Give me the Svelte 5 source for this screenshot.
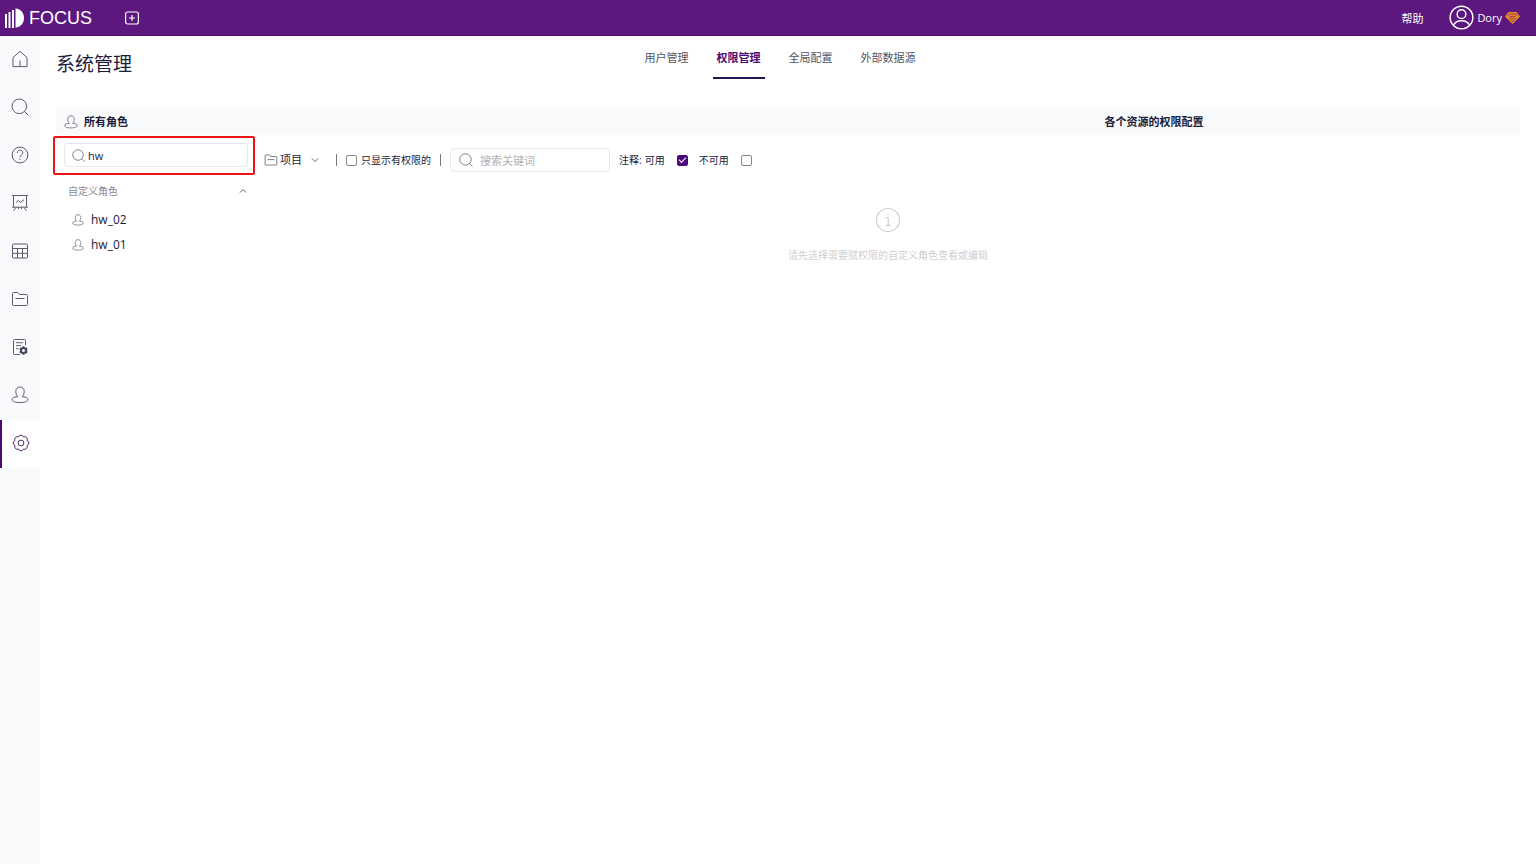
<script lang="ts">
  type Role = { id: number; name: string };

  const navItems = [
    { key: "home", label: "首页" },
    { key: "search", label: "搜索" },
    { key: "help", label: "问答" },
    { key: "board", label: "数据看板" },
    { key: "table", label: "数据表" },
    { key: "folder", label: "资源" },
    { key: "config", label: "数据配置" },
    { key: "user", label: "用户" },
    { key: "gear", label: "系统管理" },
  ];
  const tabs = ["用户管理", "权限管理", "全局配置", "外部数据源"];
  const roles: Role[] = [
    { id: 2, name: "hw_02" },
    { id: 1, name: "hw_01" },
  ];

  let activeNav = $state("gear");
  let activeTab = $state("权限管理");
  let roleFilter = $state("hw");
  let keyword = $state("");
  let onlyGranted = $state(false);
  let available = $state(true);
  let unavailable = $state(false);
  let expanded = $state(true);

  const visibleRoles = $derived(roles.filter((r) => r.name.includes(roleFilter)));
</script>

{#snippet icon(name: string, size: number)}
  <svg class="icon" width={size} height={size} viewBox="0 0 18 18" aria-hidden="true">
    {#if name === "home"}
      <path d="M2 7.600 9 1.300l7 6.300v9H2zM9 16.600V10.500" />
    {:else if name === "search"}
      <circle cx="8.300" cy="8.300" r="7.300" />
      <path d="m13.300 13.300 4 4" />
    {:else if name === "help"}
      <circle cx="9" cy="9" r="7.900" />
      <path d="M6.200 7c0-3.800 5.700-3.700 5.700-.3 0 2.200-2.900 2-2.900 4.600M9 12.700v1.300" />
    {:else if name === "board"}
      <path d="M1 1.500h16M2.500 1.500v11.700M15.500 1.500v11.700M1 13.200h16M5.200 13.200l-2.700 3.600M12.800 13.200l2.700 3.600M7.500 13.200v2M10.500 13.200v2M5 8.500l2.300-2 2.400 2L13 5.700" />
    {:else if name === "table"}
      <rect x="1.500" y="2" width="15" height="14" rx="1" />
      <path d="M1.500 6.500h15M1.500 11.300h15M6.500 6.500V16M11.500 6.500V16" />
    {:else if name === "folder"}
      <path d="M1.500 15V3.500c0-.6.400-1 1-1h4.300l1.700 2h7c.6 0 1 .4 1 1V14.500c0 .6-.4 1-1 1h-13c-.6 0-1-.4-1-1M4.500 8.500h9" />
    {:else if name === "config"}
      <path d="M9 16.500H3.500c-1 0-1-.5-1-1v-13c0-.6.400-1 1-1h10c.6 0 1 .4 1 1V7M5 4.700h7M5 7.700h5M5 10.700h2.500" />
      <circle class="cog" cx="12.500" cy="12.500" r="2.500" />
      <path class="cog" d="M12.500 8.200v1.600M12.500 15.200v1.600M8.800 10.300l1.400.9M14.800 13.800l1.400.9M8.800 14.700l1.400-.9M14.800 11.200l1.400-.9" />
    {:else if name === "user"}
      <path d="M6.800 10.700C5.500 9.400 4.800 7.400 4.800 5.400 4.800 2.700 6.500 1 9 1s4.200 1.700 4.200 4.400c0 2-.7 4-2 5.300" />
      <path d="M6.800 10.700C3.300 10.900 1 12 1 13.600c0 2 3.500 3 8 3s8-1 8-3c0-1.600-2.300-2.700-5.800-2.900" />
    {:else if name === "gear"}
      <circle cx="9" cy="9" r="2.900" />
      <path d="M6.500 3a2.600 2.600 0 0 1 5 0a2.600 2.600 0 0 1 3.500 3.500a2.600 2.600 0 0 1 0 5a2.600 2.600 0 0 1-3.500 3.500a2.600 2.600 0 0 1-5 0a2.600 2.600 0 0 1-3.500-3.500a2.600 2.600 0 0 1 0-5a2.600 2.600 0 0 1 3.500-3.500z" />
    {/if}
  </svg>
{/snippet}

<div class="page">
  <header class="topbar">
    <a class="logo" href="#home">
      <svg width="20" height="20" viewBox="0 0 20 20" aria-hidden="true">
        <path d="M0 6h2v14H0zM3.500 4h2v16h-2zM7 2h2v18H7zM10.500 0.500C15.500.500 19 4.800 19 10s-3.500 9.500-8.500 9.500z" />
      </svg>
      <span>FOCUS</span>
    </a>
    <button class="create" aria-label="新建">
      <svg width="14" height="14" viewBox="0 0 14 14" aria-hidden="true">
        <rect x="0.600" y="1" width="12.800" height="12" rx="2" />
        <path d="M7 4v6M4 7h6" />
      </svg>
    </button>
    <div class="account">
      <a class="help" href="#help">帮助</a>
      <button class="profile">
        <svg width="25" height="25" viewBox="0 0 26 26" aria-hidden="true">
          <circle cx="13" cy="13" r="11.800" />
          <circle cx="13" cy="9.500" r="4.500" />
          <path d="M4.500 21.200c1.500-3.400 4.900-4.900 8.500-4.900s7 1.500 8.500 4.900" />
        </svg>
        <span>Dory</span>
        <svg class="gem" width="15" height="12" viewBox="0 0 15 12" aria-hidden="true">
          <path class="gem-body" d="M3.500 0h8L15 4.500 7.500 12 0 4.500z" />
          <path class="gem-facets" d="M2.300 4.300 4.200 2h6.600l1.900 2.300M5 4.300h5L7.500 7.300zM4 6l3.500 3.800L11 6" />
        </svg>
      </button>
    </div>
  </header>

  <div class="body">
    <nav class="sidebar">
      {#each navItems as item (item.key)}
        <button
          class="nav-item"
          class:active={activeNav === item.key}
          aria-label={item.label}
          onclick={() => (activeNav = item.key)}
        >
          {@render icon(item.key, 18)}
        </button>
      {/each}
    </nav>

    <main class="content">
      <div class="heading">
        <h1>系统管理</h1>
        <div class="tabs" role="tablist">
          {#each tabs as tab}
            <button
              class="tab"
              class:active={activeTab === tab}
              role="tab"
              aria-selected={activeTab === tab}
              onclick={() => (activeTab = tab)}>{tab}</button
            >
          {/each}
        </div>
      </div>

      <div class="band">
        <h2 class="band-roles">{@render icon("user", 14)}所有角色</h2>
        <h2 class="band-resources">各个资源的权限配置</h2>
      </div>

      <div class="columns">
        <aside class="roles">
          <div class="role-search">
            <label class="field">
              {@render icon("search", 13)}
              <input type="text" aria-label="搜索角色" bind:value={roleFilter} />
            </label>
            <span class="marker"></span>
          </div>
          <button class="group" aria-expanded={expanded} onclick={() => (expanded = !expanded)}>
            自定义角色
            <svg class="icon" width="8" height="8" viewBox="0 0 8 8" aria-hidden="true">
              <path d="m1 5.500 3-3 3 3" />
            </svg>
          </button>
          {#if expanded}
            <ul>
              {#each visibleRoles as role (role.id)}
                <li><button class="role">{@render icon("user", 12)}{role.name}</button></li>
              {/each}
            </ul>
          {/if}
        </aside>

        <section class="resources">
          <div class="toolbar">
            <button class="kind">
              {@render icon("folder", 14)}
              项目
              <svg class="icon chevron" width="8" height="8" viewBox="0 0 8 8" aria-hidden="true">
                <path d="m1 2.500 3 3 3-3" />
              </svg>
            </button>
            <span class="divider"></span>
            <label class="only">
              <input type="checkbox" bind:checked={onlyGranted} />只显示有权限的
            </label>
            <span class="divider"></span>
            <label class="field keyword">
              {@render icon("search", 14)}
              <input type="text" placeholder="搜索关键词" aria-label="搜索关键词" bind:value={keyword} />
            </label>
            <div class="legend">
              <span>注释:</span>
              <label>可用<input type="checkbox" bind:checked={available} /></label>
              <label>不可用<input type="checkbox" bind:checked={unavailable} /></label>
            </div>
          </div>

          <div class="empty">
            <svg width="26" height="26" viewBox="0 0 26 26" aria-hidden="true">
              <circle cx="13" cy="13" r="11.500" />
              <path d="M13 6.500v1.800M11 10.700h2.200v7.500M10.700 18.300h5" />
            </svg>
            <p>请先选择需要赋权限的自定义角色查看或编辑</p>
          </div>
        </section>
      </div>
    </main>
  </div>
</div>

<style>
  :global(body) {
    margin: 0;
  }

  .page {
    display: flex;
    flex-direction: column;
    min-height: 100vh;
    background: #fff;
    color: #1b1b3a;
    font-family: "Open Sans", "Noto Sans CJK SC", sans-serif;
    font-size: 11px;
    line-height: 16px;
  }

  .page *,
  .page {
    box-sizing: border-box;
  }

  button,
  input {
    margin: 0;
    padding: 0;
    border: 0;
    background: none;
    color: inherit;
    font: inherit;
  }

  button {
    cursor: pointer;
  }

  a {
    color: inherit;
    text-decoration: none;
  }

  svg {
    display: block;
    flex: none;
    fill: none;
  }

  .icon {
    stroke: #5b5b6b;
    stroke-width: 1;
    stroke-linejoin: round;
  }

  /* top bar */
  .topbar {
    display: flex;
    align-items: center;
    height: 36px;
    padding: 0 16px 0 5px;
    background: #5c187f;
    border-bottom: 1px solid #4b0f70;
    color: #fff;
  }

  .logo {
    display: flex;
    align-items: center;
    gap: 4px;
    font-family: "Liberation Sans", sans-serif;
    font-size: 18px;
    line-height: 20px;
  }

  .logo svg {
    fill: #fff;
  }

  .create {
    margin-left: 33px;
  }

  .create svg {
    stroke: #fff;
    stroke-width: 1.2;
  }

  .account {
    display: flex;
    align-items: center;
    gap: 26px;
    margin-left: auto;
    line-height: 18px;
  }

  .help {
    padding-top: 2px;
  }

  .profile {
    display: flex;
    align-items: center;
    gap: 3px;
  }

  .profile svg {
    stroke: #fff;
    stroke-width: 1.5;
  }

  .profile .gem {
    stroke: none;
  }

  .gem-body {
    fill: #f08c1e;
  }

  .profile .gem-facets {
    stroke: #5c187f;
    stroke-width: 0.7;
  }

  .body {
    display: flex;
    flex: 1;
  }

  /* sidebar */
  .sidebar {
    display: flex;
    flex: none;
    flex-direction: column;
    width: 40px;
    background: #f9fafc;
  }

  .nav-item {
    display: flex;
    align-items: center;
    justify-content: center;
    height: 48px;
    padding-bottom: 2px;
  }

  .nav-item.active {
    border-left: 2px solid #4b0a77;
    background: #fff;
  }

  .nav-item.active .icon {
    stroke: #4b2a6b;
  }

  .cog {
    stroke: #44445a;
    stroke-width: 2;
  }

  /* content */
  .content {
    flex: 1;
    min-width: 0;
    padding: 0 16px;
  }

  .heading {
    display: grid;
    grid-template-columns: 1fr auto 1fr;
    height: 71px;
    padding-right: 16px;
  }

  h1 {
    margin: 16px 0 0;
    font-size: 19px;
    font-weight: 400;
    line-height: 24px;
  }

  .tabs {
    display: flex;
    align-items: flex-start;
    gap: 20px;
  }

  .tab {
    height: 43px;
    padding: 2px 4px 0;
    border-bottom: 2px solid transparent;
    color: #55555f;
    line-height: 40px;
  }

  .tab.active {
    border-color: #1f1652;
    color: #4b0a77;
    font-weight: 700;
  }

  .band {
    display: grid;
    grid-template-columns: 1fr 1fr;
    align-items: center;
    height: 28px;
    padding-top: 2px;
    background: #f9fafc;
  }

  h2 {
    display: flex;
    align-items: center;
    gap: 6px;
    margin: 0;
    font-size: 11px;
    font-weight: 700;
  }

  .band-roles {
    padding-left: 8px;
  }

  .band-resources {
    justify-content: center;
  }

  .columns {
    display: flex;
  }

  .roles {
    flex: none;
    width: 200px;
  }

  .field {
    display: flex;
    align-items: center;
    gap: 3px;
    height: 24px;
    padding: 0 7px;
    border: 1px solid #e3e8ef;
    border-radius: 4px;
    background: #fff;
  }

  .field input {
    flex: 1;
    min-width: 0;
    padding-top: 1px;
    outline: none;
  }

  .field input::placeholder {
    color: #b0b0b6;
    opacity: 1;
  }

  .role-search {
    position: relative;
    padding: 8px;
  }

  /* highlight frame drawn over the search box */
  .marker {
    position: absolute;
    inset: 1px 1px 0 -3px;
    border: 2px solid #f01414;
    border-radius: 2px;
    pointer-events: none;
  }

  .group {
    display: flex;
    align-items: center;
    justify-content: space-between;
    width: 100%;
    height: 32px;
    padding: 0 9px 0 12px;
    color: #8a8a90;
    font-size: 10px;
  }

  ul {
    margin: 0;
    padding: 0;
    list-style: none;
  }

  .role {
    display: flex;
    align-items: center;
    gap: 7px;
    width: 100%;
    height: 25px;
    padding: 0 16px;
    font-size: 12px;
  }

  .resources {
    flex: 1;
    min-width: 0;
  }

  .toolbar {
    display: flex;
    align-items: center;
    gap: 9px;
    padding: 13px 8px;
  }

  .kind {
    display: flex;
    align-items: center;
    gap: 2px;
    margin-right: 8px;
  }

  .chevron {
    margin-left: 7px;
  }

  .divider {
    width: 1px;
    height: 12px;
    background: #77777f;
  }

  .only {
    display: flex;
    align-items: center;
    gap: 4px;
    font-size: 10px;
  }

  .keyword {
    gap: 7px;
    width: 160px;
    padding: 0 8px;
  }

  .legend {
    display: flex;
    gap: 3px;
    font-size: 10px;
  }

  .legend label {
    display: flex;
    align-items: center;
    gap: 12px;
    margin-right: 8px;
  }

  input[type="checkbox"] {
    display: grid;
    place-content: center;
    width: 11px;
    height: 11px;
    border: 1px solid #85858c;
    border-radius: 2px;
    background: #fff;
    appearance: none;
  }

  input[type="checkbox"]:checked {
    border-color: #4b0a77;
    background: #4b0a77;
  }

  input[type="checkbox"]:checked::before {
    width: 6px;
    height: 3px;
    margin-bottom: 2px;
    border: solid #fff;
    border-width: 0 0 1px 1px;
    content: "";
    transform: rotate(-45deg);
  }

  .empty {
    display: flex;
    flex-direction: column;
    align-items: center;
    gap: 14px;
    padding-top: 22px;
    color: #cfcfd3;
    font-size: 10px;
  }

  .empty svg {
    stroke: #cfcfd3;
    stroke-width: 1.2;
  }

  .empty p {
    margin: 0;
  }
</style>
